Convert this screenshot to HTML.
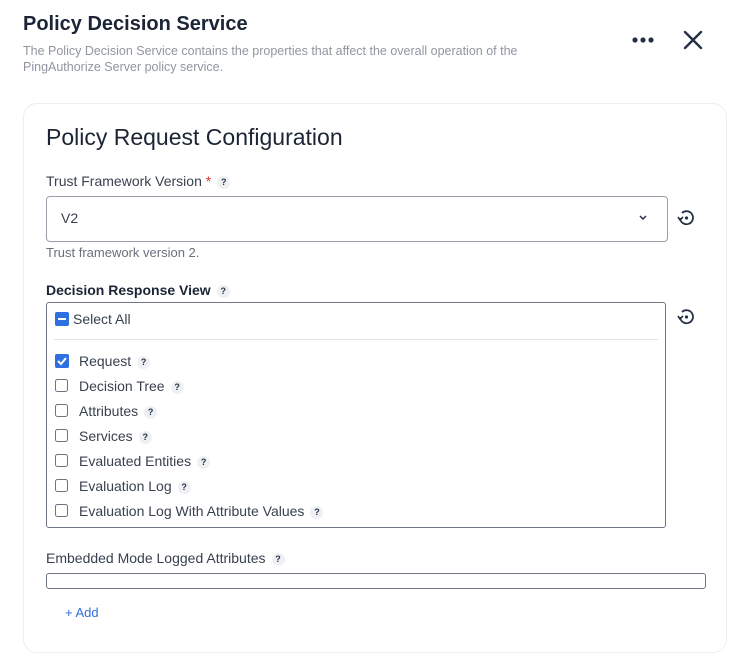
<!DOCTYPE html><html><head><style>
body{margin:0;width:750px;height:670px;background:#fff;font-family:"Liberation Sans",sans-serif;color:#253246;position:relative;overflow:hidden}
.a{position:absolute;white-space:nowrap}
.q{display:inline-block;width:13px;height:13px;border-radius:50%;background:#eef0f4;font-size:9px;font-weight:bold;text-align:center;line-height:13px;color:#253246;vertical-align:middle;margin-left:6px}
.cb{position:absolute;left:55px;width:11px;height:11px;border:1.6px solid #6b7585;border-radius:2.5px}
.lb{position:absolute;left:79px;font-size:14px;color:#38414f}
</style></head><body>
<div class="a" style="left:23px;top:13px;font-size:20px;font-weight:bold;color:#1b2535">Policy Decision Service</div>
<div class="a" style="left:23px;top:43px;font-size:12.5px;color:#9096a0;line-height:16px">The Policy Decision Service contains the properties that affect the overall operation of the<br>PingAuthorize Server policy service.</div>
<svg class="a" style="left:630px;top:34px" width="28" height="12"><circle cx="5" cy="6" r="2.6" fill="#253246"/><circle cx="13" cy="6" r="2.6" fill="#253246"/><circle cx="21" cy="6" r="2.6" fill="#253246"/></svg>
<svg class="a" style="left:682px;top:29px" width="22" height="22"><path d="M3 3L19 19M19 3L3 19" stroke="#253246" stroke-width="2.4" stroke-linecap="round"/></svg>
<div class="a" style="left:23px;top:103px;width:702px;height:548px;border:1px solid #eceef1;border-radius:14px"></div>
<div class="a" style="left:46px;top:124px;font-size:23px;color:#1b2535">Policy Request Configuration</div>
<div class="a" style="left:46px;top:173px;font-size:14px;color:#38414f">Trust Framework Version <span style="color:#d9362b">*</span><span class="q">?</span></div>
<div class="a" style="left:46px;top:196px;width:620px;height:44px;border:1px solid #9aa0a9;border-radius:4px"></div>
<div class="a" style="left:61px;top:210px;font-size:14px;color:#38414f">V2</div>
<svg class="a" style="left:638px;top:214px" width="10" height="8"><path d="M2 2L5 5L8 2" stroke="#253246" stroke-width="1.5" fill="none"/></svg>
<svg class="a" style="left:676px;top:208px" width="20" height="20"><path d="M4 10A6.5 6.5 0 1 0 6 5" stroke="#253246" stroke-width="1.8" fill="none"/><path d="M2 9L4 12L7 9" stroke="#253246" stroke-width="1.6" fill="none"/><circle cx="10.5" cy="10" r="1.6" fill="#253246"/></svg>
<div class="a" style="left:46px;top:245px;font-size:13px;color:#68707c">Trust framework version 2.</div>
<div class="a" style="left:46px;top:282px;font-size:14px;font-weight:bold;color:#1b2535">Decision Response View<span class="q">?</span></div>
<svg class="a" style="left:676px;top:307px" width="20" height="20"><path d="M4 10A6.5 6.5 0 1 0 6 5" stroke="#253246" stroke-width="1.8" fill="none"/><path d="M2 9L4 12L7 9" stroke="#253246" stroke-width="1.6" fill="none"/><circle cx="10.5" cy="10" r="1.6" fill="#253246"/></svg>
<div class="a" style="left:46px;top:302px;width:618px;height:224px;border:1px solid #6f7785;border-radius:3px"></div>
<div class="a" style="left:55px;top:312px;width:14px;height:14px;background:#2f6fe0;border-radius:2px"><div style="position:absolute;left:3px;top:6px;width:8px;height:2px;background:#fff"></div></div>
<div class="a" style="left:73px;top:311px;font-size:14px;color:#38414f">Select All</div>
<div class="a" style="left:54px;top:339px;width:604px;height:1px;background:#dfe2e6"></div>
<div class="a" style="left:55px;top:354px;width:14px;height:14px;background:#2f6fe0;border-radius:2px"><svg width="14" height="14"><path d="M3 7L6 10L11 4" stroke="#fff" stroke-width="2" fill="none"/></svg></div>
<div class="lb" style="top:353px">Request<span class="q">?</span></div>
<div class="cb" style="top:379px"></div><div class="lb" style="top:378px">Decision Tree<span class="q">?</span></div>
<div class="cb" style="top:404px"></div><div class="lb" style="top:403px">Attributes<span class="q">?</span></div>
<div class="cb" style="top:429px"></div><div class="lb" style="top:428px">Services<span class="q">?</span></div>
<div class="cb" style="top:454px"></div><div class="lb" style="top:453px">Evaluated Entities<span class="q">?</span></div>
<div class="cb" style="top:479px"></div><div class="lb" style="top:478px">Evaluation Log<span class="q">?</span></div>
<div class="cb" style="top:504px"></div><div class="lb" style="top:503px">Evaluation Log With Attribute Values<span class="q">?</span></div>
<div class="a" style="left:46px;top:550px;font-size:14px;color:#38414f">Embedded Mode Logged Attributes<span class="q">?</span></div>
<div class="a" style="left:46px;top:573px;width:658px;height:14px;border:1px solid #6f7785;border-radius:3px"></div>
<div class="a" style="left:65px;top:605px;font-size:13px;color:#2f6fe0">+ Add</div>
</body></html>
